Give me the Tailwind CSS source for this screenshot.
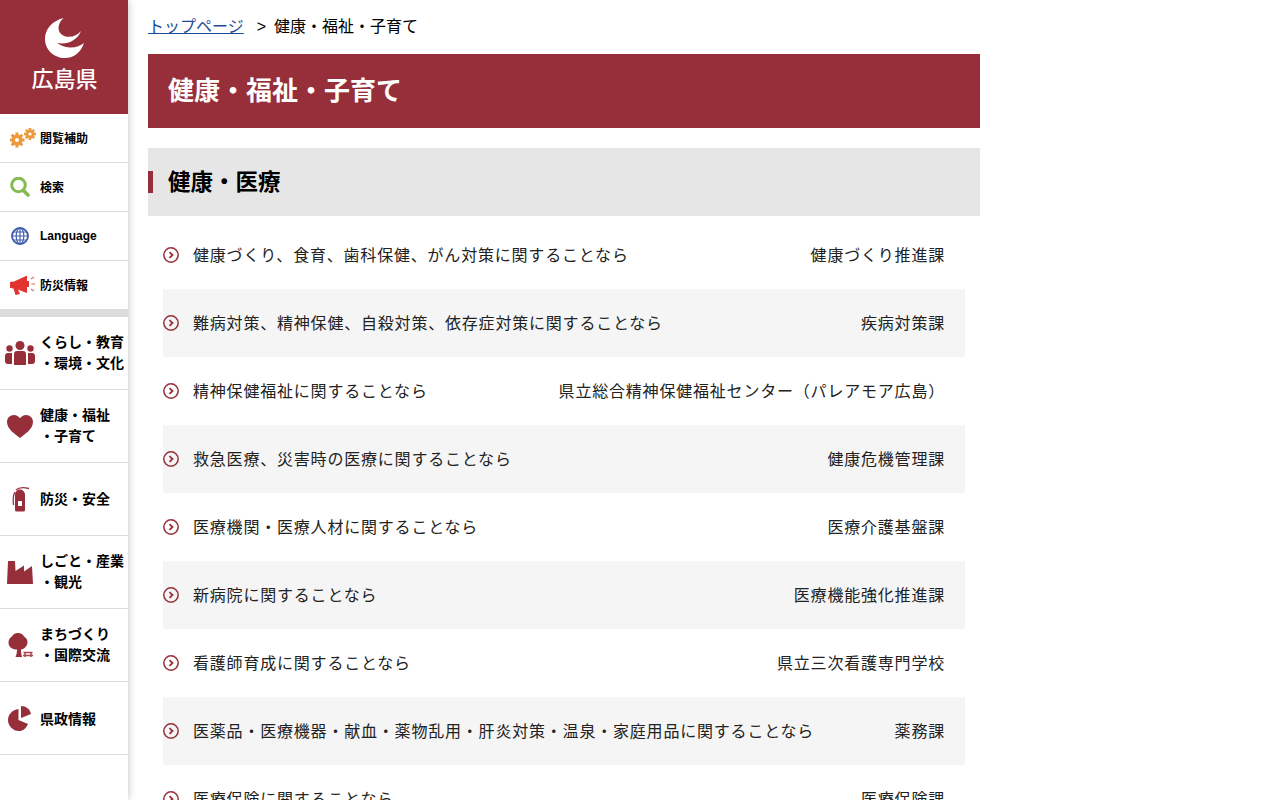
<!DOCTYPE html>
<html lang="ja">
  <head>
    <meta charset="UTF-8" />
    <title>健康・福祉・子育て - 広島県</title>
    <script src="https://cdn.jsdelivr.net/npm/@tailwindcss/browser@4"></script>
  </head>
  <body class="bg-white text-black font-['Liberation_Sans','Noto_Sans_CJK_JP',sans-serif] h-[800px] overflow-hidden">
    <div class="flex h-[800px] overflow-hidden">
      <!-- sidebar -->
      <aside class="w-[128px] shrink-0 h-[800px] bg-white shadow-[0_0_8px_rgba(0,0,0,0.25)] z-10">
        <div class="h-[114px] bg-[#972f3b] flex flex-col items-center pt-[18px]">
          <svg class="w-[40px] h-[40px] ml-[2px]" viewBox="0 0 40 40">
            <path fill="#fff" d="M18.500 0C7 3 0 11 0 21C0 32 9 40 20 40C29 40 36 34 39 25C33 30 22 32 12 25C22 27 32 23 36 13C31 19 22 21 16 16C12 12 13 5 18.500 0Z" />
          </svg>
          <span class="text-[22px] leading-[26px] mt-[9px] pl-px font-medium text-white">広島県</span>
        </div>

        <ul>
          <li class="h-[49px] flex items-center border-b border-[#dcdcdc] text-[12px] font-bold">
            <span class="w-[40px] shrink-0 flex justify-center pl-[6px]">
              <svg class="w-[26px] h-[20px]" viewBox="0 0 26 20">
                <g stroke="#ec9a3f" stroke-width="3">
                  <path d="M7 4.500v15M-0.500 12h15M1.700 6.700l10.600 10.600M12.300 6.700l-10.600 10.600" />
                  <path stroke-width="2.600" d="M20 0v12M14 6h12M15.800 1.800l8.400 8.400M24.200 1.800l-8.400 8.400" />
                </g>
                <circle cx="7" cy="12" r="5.500" fill="#ec9a3f" />
                <circle cx="20" cy="6" r="4.500" fill="#ec9a3f" />
                <circle cx="7" cy="12" r="2" fill="#fff" />
                <circle cx="20" cy="6" r="1.600" fill="#fff" />
              </svg>
            </span>
            <span class="pt-[2px]">閲覧補助</span>
          </li>
          <li class="h-[49px] flex items-center border-b border-[#dcdcdc] text-[12px] font-bold">
            <span class="w-[40px] shrink-0 flex justify-center">
              <svg class="w-[20px] h-[20px]" viewBox="0 0 20 20">
                <circle cx="8.500" cy="8" r="6.800" fill="none" stroke="#85bb4f" stroke-width="3" />
                <path d="M13.500 13.500L18 18" stroke="#85bb4f" stroke-width="3.600" stroke-linecap="round" />
              </svg>
            </span>
            <span class="pt-[2px]">検索</span>
          </li>
          <li class="h-[49px] flex items-center border-b border-[#dcdcdc] text-[12px] font-bold">
            <span class="w-[40px] shrink-0 flex justify-center">
              <svg class="w-[18px] h-[18px]" viewBox="0 0 18 18">
                <g fill="none" stroke="#3f5cab">
                  <circle cx="9" cy="9" r="8" stroke-width="1.800" />
                  <ellipse cx="9" cy="9" rx="3.800" ry="8" stroke-width="1.100" />
                  <path stroke-width="1.100" d="M9 1v16M1 9h16M2.200 5h13.600M2.200 13h13.600" />
                </g>
              </svg>
            </span>
            <span>Language</span>
          </li>
          <li class="h-[49px] flex items-center border-b border-[#dcdcdc] text-[12px] font-bold">
            <span class="w-[40px] shrink-0 flex justify-center pl-[5px]">
              <svg class="w-[25px] h-[20px]" viewBox="0 0 25 20">
                <path fill="#e2342f" d="M0 7L4 6.500L15 1.500L17 0.500V18L14 17L8 14.500L10 19L5.500 20L3.500 13.500L0 13Z" />
                <path fill="#e2342f" d="M17 6h2v6h-2z" />
                <path stroke="#e8696a" stroke-width="1.200" fill="none" d="M21 4l3-2M21.500 9h3.500M21 14l3 2" />
              </svg>
            </span>
            <span class="pt-[2px]">防災情報</span>
          </li>
        </ul>

        <div class="h-[8px] bg-[#dcdcdc] -mt-px"></div>

        <ul class="text-[14px] font-bold leading-[21px]">
          <li class="h-[73px] flex items-center border-b border-[#dcdcdc]">
            <span class="w-[40px] shrink-0 flex justify-center">
              <svg class="w-[30px] h-[24px]" viewBox="0 0 30 24">
                <g fill="#972f3b">
                  <circle cx="15" cy="4.500" r="4.500" />
                  <circle cx="4.500" cy="7.500" r="3.200" />
                  <circle cx="25.500" cy="7.500" r="3.200" />
                  <path d="M9 13a3 3 0 0 1 3-3h6a3 3 0 0 1 3 3v11H9z" />
                  <path d="M0 15a3 3 0 0 1 3-3h4v11H3a3 3 0 0 1-3-3zM23 12h4a3 3 0 0 1 3 3v5a3 3 0 0 1-3 3h-4z" />
                </g>
              </svg>
            </span>
            <span class="whitespace-nowrap">くらし・教育<br />・環境・文化</span>
          </li>
          <li class="h-[73px] flex items-center border-b border-[#dcdcdc]">
            <span class="w-[40px] shrink-0 flex justify-center">
              <svg class="w-[26px] h-[23px]" viewBox="0 0 26 23">
                <path fill="#972f3b" d="M13 23C8 19 0 14 0 7C0 3 3 0 7 0C9.500 0 11.700 1.300 13 3.300C14.300 1.300 16.500 0 19 0C23 0 26 3 26 7C26 14 18 19 13 23Z" />
              </svg>
            </span>
            <span class="whitespace-nowrap">健康・福祉<br />・子育て</span>
          </li>
          <li class="h-[73px] flex items-center border-b border-[#dcdcdc]">
            <span class="w-[40px] shrink-0 flex justify-center">
              <svg class="w-[18px] h-[26px]" viewBox="0 0 18 26">
                <path fill="#972f3b" fill-rule="evenodd" d="M9 3.500C12 3.500 14 6 14 9V24a1.500 1.500 0 0 1-1.500 1.500H5.500A1.500 1.500 0 0 1 4 24V9C4 6 6 3.500 9 3.500ZM7 15v5h4v-5z" />
                <path fill="none" stroke="#972f3b" stroke-width="1.300" d="M5 4C8 1 12 1 18 2.500M4 6C2 9 2 14 2.500 19" />
              </svg>
            </span>
            <span>防災・安全</span>
          </li>
          <li class="h-[73px] flex items-center border-b border-[#dcdcdc]">
            <span class="w-[40px] shrink-0 flex justify-center">
              <svg class="w-[26px] h-[23px]" viewBox="0 0 26 23">
                <path fill="#972f3b" d="M1 0H8L8.500 10L17 4.500V10.500L25 5L26 23H0Z" />
              </svg>
            </span>
            <span class="whitespace-nowrap">しごと・産業<br />・観光</span>
          </li>
          <li class="h-[73px] flex items-center border-b border-[#dcdcdc]">
            <span class="w-[40px] shrink-0 flex justify-center">
              <svg class="w-[25px] h-[26px]" viewBox="0 0 25 26">
                <path fill="#972f3b" d="M10 1C13 1 15 2.500 16 4.500C18 5.500 19.500 7.500 19.500 10C19.500 14 16.500 17 13 17.500C13 20 13.500 23 14 25H7.500C8.500 23 9 20 9 17.500C4 17.500 0.500 15 0.500 10.500C0.500 7.500 2 5.500 4 4.500C5 2.500 7 1 10 1Z" />
                <path fill="none" stroke="#a84653" stroke-width="1.500" d="M15.500 20.500h9M17 20.500v4.500M23 20.500v4.500M15 23.500h10" />
              </svg>
            </span>
            <span class="whitespace-nowrap">まちづくり<br />・国際交流</span>
          </li>
          <li class="h-[73px] flex items-center border-b border-[#dcdcdc]">
            <span class="w-[40px] shrink-0 flex justify-center">
              <svg class="w-[24px] h-[25px]" viewBox="0 0 24 25">
                <path fill="#972f3b" d="M10.500 3V14L20 18C18 22.500 15 25 11 25C5 25 0 20 0 14C0 8.500 4.500 3.500 10.500 3Z" />
                <path fill="#972f3b" d="M13 0C18 0 22 3 23 8L13 12Z" />
              </svg>
            </span>
            <span class="pt-[2px]">県政情報</span>
          </li>
        </ul>
      </aside>

      <!-- main -->
      <main class="w-[832px] ml-[20px] shrink-0">
        <div class="h-[54px] flex items-center text-[16px] pb-[1px]">
          <a href="#" class="text-[#1c4a95] underline">トップページ</a>
          <span class="ml-[13px]">&gt;</span>
          <span class="ml-[8px]">健康・福祉・子育て</span>
        </div>

        <h1 class="h-[74px] bg-[#972f3b] text-white text-[26px] font-bold flex items-center pl-[20px]">健康・福祉・子育て</h1>

        <h2 class="relative mt-[20px] h-[68px] bg-[#e6e6e6] text-[22.500px] font-bold flex items-center pl-[20px] pt-[2px]">
          <span class="absolute left-0 top-[23px] w-[5px] h-[22px] bg-[#972f3b]"></span>
          健康・医療
        </h2>

        <ul class="mt-[5px] mx-[15px] text-[16px] tracking-[0.05em] text-[#222]">
          <li class="h-[68px] flex items-center pr-[20px]">
            <svg class="w-[16px] h-[16px] shrink-0 mr-[14px]" viewBox="0 0 16 16"><circle cx="8" cy="8" r="7.200" fill="none" stroke="#972f3b" stroke-width="1.500" /><path d="M6.500 5.200L9.500 8L6.500 10.800" fill="none" stroke="#972f3b" stroke-width="1.800" /></svg>
            <a href="#" class="flex-1 pt-[2px]">健康づくり、食育、歯科保健、がん対策に関することなら</a>
            <span class="pt-[2px]">健康づくり推進課</span>
          </li>
          <li class="h-[68px] flex items-center pr-[20px] bg-[#f5f5f5]">
            <svg class="w-[16px] h-[16px] shrink-0 mr-[14px]" viewBox="0 0 16 16"><circle cx="8" cy="8" r="7.200" fill="none" stroke="#972f3b" stroke-width="1.500" /><path d="M6.500 5.200L9.500 8L6.500 10.800" fill="none" stroke="#972f3b" stroke-width="1.800" /></svg>
            <a href="#" class="flex-1 pt-[2px]">難病対策、精神保健、自殺対策、依存症対策に関することなら</a>
            <span class="pt-[2px]">疾病対策課</span>
          </li>
          <li class="h-[68px] flex items-center pr-[20px]">
            <svg class="w-[16px] h-[16px] shrink-0 mr-[14px]" viewBox="0 0 16 16"><circle cx="8" cy="8" r="7.200" fill="none" stroke="#972f3b" stroke-width="1.500" /><path d="M6.500 5.200L9.500 8L6.500 10.800" fill="none" stroke="#972f3b" stroke-width="1.800" /></svg>
            <a href="#" class="flex-1 pt-[2px]">精神保健福祉に関することなら</a>
            <span class="pt-[2px]">県立総合精神保健福祉センター（パレアモア広島）</span>
          </li>
          <li class="h-[68px] flex items-center pr-[20px] bg-[#f5f5f5]">
            <svg class="w-[16px] h-[16px] shrink-0 mr-[14px]" viewBox="0 0 16 16"><circle cx="8" cy="8" r="7.200" fill="none" stroke="#972f3b" stroke-width="1.500" /><path d="M6.500 5.200L9.500 8L6.500 10.800" fill="none" stroke="#972f3b" stroke-width="1.800" /></svg>
            <a href="#" class="flex-1 pt-[2px]">救急医療、災害時の医療に関することなら</a>
            <span class="pt-[2px]">健康危機管理課</span>
          </li>
          <li class="h-[68px] flex items-center pr-[20px]">
            <svg class="w-[16px] h-[16px] shrink-0 mr-[14px]" viewBox="0 0 16 16"><circle cx="8" cy="8" r="7.200" fill="none" stroke="#972f3b" stroke-width="1.500" /><path d="M6.500 5.200L9.500 8L6.500 10.800" fill="none" stroke="#972f3b" stroke-width="1.800" /></svg>
            <a href="#" class="flex-1 pt-[2px]">医療機関・医療人材に関することなら</a>
            <span class="pt-[2px]">医療介護基盤課</span>
          </li>
          <li class="h-[68px] flex items-center pr-[20px] bg-[#f5f5f5]">
            <svg class="w-[16px] h-[16px] shrink-0 mr-[14px]" viewBox="0 0 16 16"><circle cx="8" cy="8" r="7.200" fill="none" stroke="#972f3b" stroke-width="1.500" /><path d="M6.500 5.200L9.500 8L6.500 10.800" fill="none" stroke="#972f3b" stroke-width="1.800" /></svg>
            <a href="#" class="flex-1 pt-[2px]">新病院に関することなら</a>
            <span class="pt-[2px]">医療機能強化推進課</span>
          </li>
          <li class="h-[68px] flex items-center pr-[20px]">
            <svg class="w-[16px] h-[16px] shrink-0 mr-[14px]" viewBox="0 0 16 16"><circle cx="8" cy="8" r="7.200" fill="none" stroke="#972f3b" stroke-width="1.500" /><path d="M6.500 5.200L9.500 8L6.500 10.800" fill="none" stroke="#972f3b" stroke-width="1.800" /></svg>
            <a href="#" class="flex-1 pt-[2px]">看護師育成に関することなら</a>
            <span class="pt-[2px]">県立三次看護専門学校</span>
          </li>
          <li class="h-[68px] flex items-center pr-[20px] bg-[#f5f5f5]">
            <svg class="w-[16px] h-[16px] shrink-0 mr-[14px]" viewBox="0 0 16 16"><circle cx="8" cy="8" r="7.200" fill="none" stroke="#972f3b" stroke-width="1.500" /><path d="M6.500 5.200L9.500 8L6.500 10.800" fill="none" stroke="#972f3b" stroke-width="1.800" /></svg>
            <a href="#" class="flex-1 pt-[2px]">医薬品・医療機器・献血・薬物乱用・肝炎対策・温泉・家庭用品に関することなら</a>
            <span class="pt-[2px]">薬務課</span>
          </li>
          <li class="h-[68px] flex items-center pr-[20px]">
            <svg class="w-[16px] h-[16px] shrink-0 mr-[14px]" viewBox="0 0 16 16"><circle cx="8" cy="8" r="7.200" fill="none" stroke="#972f3b" stroke-width="1.500" /><path d="M6.500 5.200L9.500 8L6.500 10.800" fill="none" stroke="#972f3b" stroke-width="1.800" /></svg>
            <a href="#" class="flex-1 pt-[2px]">医療保険に関することなら</a>
            <span class="pt-[2px]">医療保険課</span>
          </li>
        </ul>
      </main>
    </div>
  </body>
</html>
